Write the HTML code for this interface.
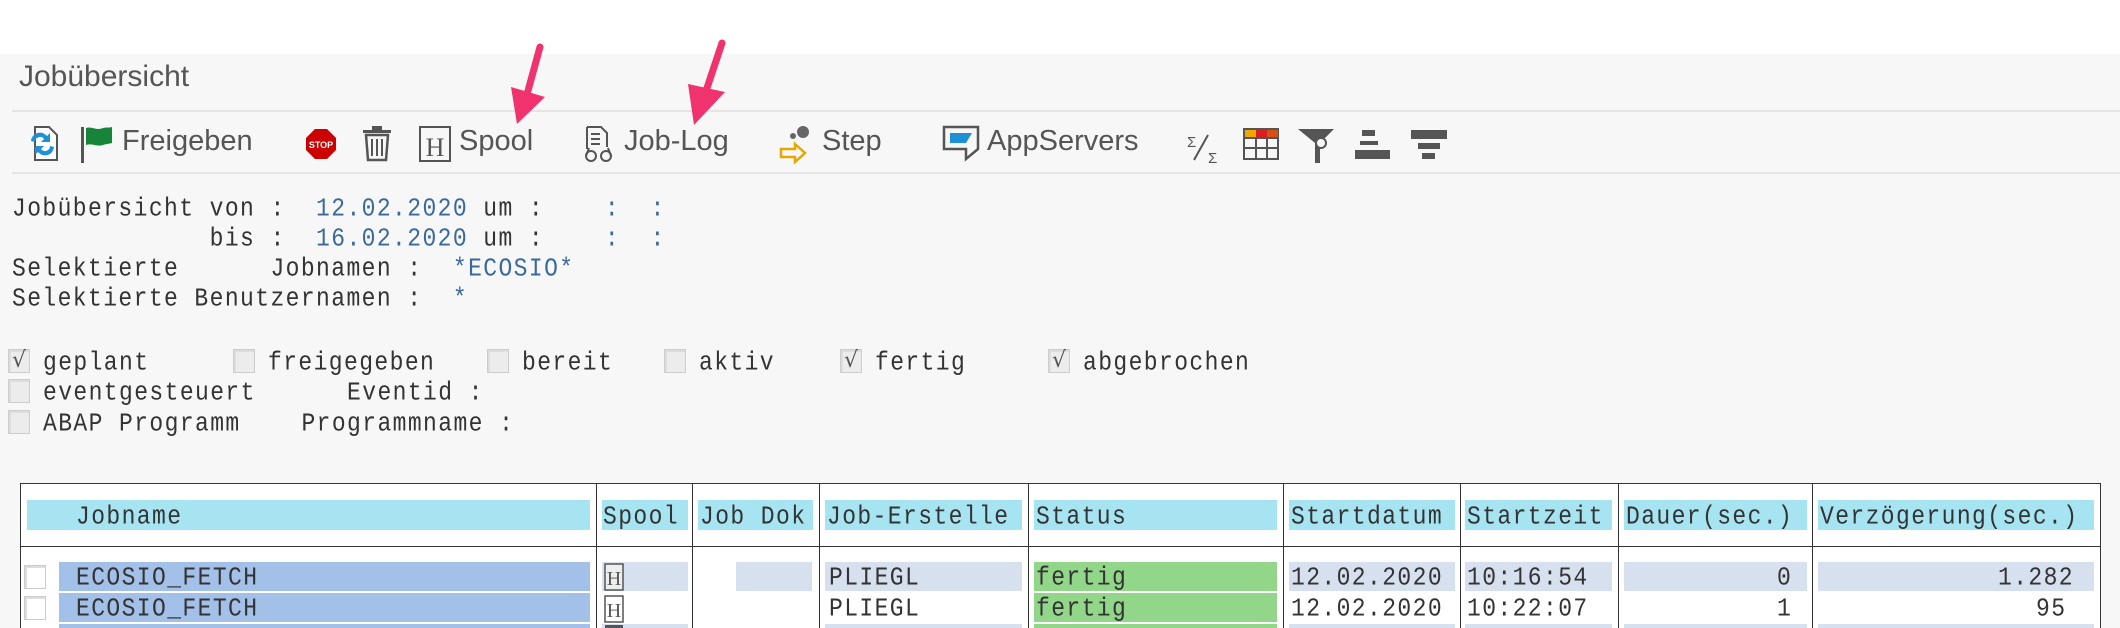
<!DOCTYPE html>
<html style="width:2120px;height:628px;overflow:hidden"><head><meta charset="utf-8"><style>
*{margin:0;padding:0;box-sizing:border-box}
body{width:2120px;height:628px;background:#fff;position:relative;overflow:hidden;font-family:"Liberation Sans",sans-serif}
.bg{position:absolute;left:0;top:54px;width:2120px;height:574px;background:#f7f7f7}
.a{position:absolute;white-space:pre}
.tb{font-size:29px;color:#555;top:125px}
.m{font-family:"Liberation Mono",monospace;font-size:23px;letter-spacing:1.4px;color:#333;transform:scaleY(1.12);transform-origin:0 0}
.v{color:#3a6a9c}
.cb{position:absolute;width:22px;height:24px;background:#ececec;border:1px solid #ccc;box-shadow:inset 2px 2px 0 #ddd}
.cb.c::after{content:"\221A";position:absolute;left:3px;top:-2px;font-size:22px;color:#555;font-family:"DejaVu Sans",sans-serif}
.hd{position:absolute;background:#a6e4f2;top:500px;height:30px}
.vl{position:absolute;width:1px;background:#333;top:483px;height:145px}
.cell{position:absolute;height:29px}
</style></head><body>
<div class="bg"></div>
<div class="a" style="left:19px;top:60px;font-size:30px;color:#555">Jobübersicht</div>
<div style="position:absolute;left:12px;top:110px;width:2108px;height:2px;background:#e4e4e4"></div>
<div style="position:absolute;left:12px;top:172px;width:2108px;height:2px;background:#e4e4e4"></div>

<svg style="position:absolute;left:0;top:115px" width="1480" height="55">
 <path d="M35 12h14l8 8v25H35z" fill="#fff" stroke="#555" stroke-width="2"/>
 <path d="M31 26a9 9 0 0 1 16-5l3-3v9h-9l3-3a5 5 0 0 0-9 3z" fill="#1e90d8"/>
 <path d="M54 32a9 9 0 0 1-16 5l-3 3v-9h9l-3 3a5 5 0 0 0 9-3z" fill="#1e90d8"/>
 <rect x="81" y="12" width="3" height="36" fill="#555"/>
 <path d="M86 13c6 -2 10 3 17 0 3-1 6 0 9-1v16c-4 1-6 1-9 2-6 2-11-2-17 0z" fill="#18843a"/>
 <polygon points="315,14 327,14 336,23 336,35 327,44 315,44 306,35 306,23" fill="#c00"/>
 <text x="321" y="33" font-size="9" font-weight="bold" fill="#fff" text-anchor="middle" font-family="Liberation Sans">STOP</text>
 <rect x="363" y="15" width="28" height="3" fill="#555"/><rect x="372" y="11" width="10" height="4" fill="#555"/>
 <path d="M366 20h22l-2 25h-18z" fill="none" stroke="#555" stroke-width="2.5"/>
 <path d="M372 24v17M377 24v17M382 24v17" stroke="#555" stroke-width="2"/>
 <rect x="420" y="12" width="30" height="34" fill="none" stroke="#555" stroke-width="2"/>
 <text x="435" y="41" font-size="26" fill="#555" text-anchor="middle" font-family="Liberation Serif">H</text>
 <path d="M587 12h14l6 6v14" fill="none" stroke="#555" stroke-width="2"/><path d="M587 12v22" stroke="#555" stroke-width="2"/>
 <path d="M591 19h9M591 24h9M591 29h9" stroke="#555" stroke-width="2"/>
 <circle cx="591" cy="41" r="5" fill="none" stroke="#555" stroke-width="2"/><circle cx="606" cy="41" r="5" fill="none" stroke="#555" stroke-width="2"/>
 <path d="M586 41l3-8M611 41l-3-8" stroke="#555" stroke-width="2"/>
 <circle cx="803" cy="17" r="6" fill="#666"/><circle cx="793" cy="21" r="3" fill="#666"/>
 <path d="M781 34h14v-5l10 9-10 9v-5h-14z" fill="none" stroke="#e6a800" stroke-width="2.5"/>
 <path d="M944 12h34v22l-12 10v-10h-22z" fill="none" stroke="#555" stroke-width="2.5"/>
 <path d="M950 18h22l-6 10h-16z" fill="#1e90d8"/>
 <text x="1187" y="32" font-size="15" fill="#555">Σ</text><path d="M1194 45l14-25" stroke="#555" stroke-width="2"/><text x="1208" y="48" font-size="15" fill="#555">Σ</text>
 <rect x="1244" y="14" width="34" height="30" fill="none" stroke="#555" stroke-width="2"/>
 <rect x="1245" y="15" width="11" height="8" fill="#f0a800"/><rect x="1256" y="15" width="11" height="8" fill="#d82020"/><rect x="1267" y="15" width="11" height="8" fill="#d85010"/>
 <path d="M1244 23h34M1244 33h34M1256 23v21M1267 23v21" stroke="#555" stroke-width="2"/>
 <path d="M1298 14h36l-14 14v20h-5v-20z" fill="#555"/><circle cx="1321" cy="28" r="5" fill="#f7f7f7" stroke="#555" stroke-width="2"/>
 <rect x="1362" y="15" width="13" height="6" fill="#555"/><rect x="1360" y="26" width="18" height="4" fill="#555"/><rect x="1355" y="35" width="35" height="9" fill="#555"/>
 <rect x="1411" y="15" width="36" height="9" fill="#555"/><rect x="1418" y="28" width="22" height="6" fill="#555"/><rect x="1422" y="38" width="13" height="6" fill="#555"/>
</svg>
<div class="a tb" style="left:122px">Freigeben</div>
<div class="a tb" style="left:459px">Spool</div>
<div class="a tb" style="left:624px">Job-Log</div>
<div class="a tb" style="left:822px">Step</div>
<div class="a tb" style="left:987px">AppServers</div>

<svg style="position:absolute;left:0;top:0" width="800" height="140">
 <path d="M540 47 L526 98" stroke="#f0336e" stroke-width="7" stroke-linecap="round"/>
 <polygon points="511,87 545,97 517,124" fill="#f0336e"/>
 <path d="M722 43 L705 94" stroke="#f0336e" stroke-width="7" stroke-linecap="round"/>
 <polygon points="688,84 725,92 694,125" fill="#f0336e"/>
</svg>

<div class="a m" style="left:12px;top:194px">Jobübersicht von :  <span class="v">12.02.2020</span> um :    <span class="v">:  :</span></div>
<div class="a m" style="left:12px;top:224px">             bis :  <span class="v">16.02.2020</span> um :    <span class="v">:  :</span></div>
<div class="a m" style="left:12px;top:254px">Selektierte      Jobnamen :  <span class="v">*ECOSIO*</span></div>
<div class="a m" style="left:12px;top:284px">Selektierte Benutzernamen :  <span class="v">*</span></div>

<div class="cb c" style="left:8px;top:349px"></div><div class="a m" style="left:43px;top:348px">geplant</div>
<div class="cb" style="left:233px;top:349px"></div><div class="a m" style="left:268px;top:348px">freigegeben</div>
<div class="cb" style="left:487px;top:349px"></div><div class="a m" style="left:522px;top:348px">bereit</div>
<div class="cb" style="left:664px;top:349px"></div><div class="a m" style="left:699px;top:348px">aktiv</div>
<div class="cb c" style="left:840px;top:349px"></div><div class="a m" style="left:875px;top:348px">fertig</div>
<div class="cb c" style="left:1048px;top:349px"></div><div class="a m" style="left:1083px;top:348px">abgebrochen</div>
<div class="cb" style="left:8px;top:379px"></div><div class="a m" style="left:43px;top:378px">eventgesteuert      Eventid :</div>
<div class="cb" style="left:8px;top:410px"></div><div class="a m" style="left:43px;top:409px">ABAP Programm    Programmname :</div>

<div style="position:absolute;left:20px;top:483px;width:2081px;height:145px;background:#fff;border:1px solid #333;border-bottom:none"></div>
<div style="position:absolute;left:20px;top:546px;width:2081px;height:1px;background:#333"></div>
<div class="vl" style="left:596px"></div><div class="vl" style="left:692px"></div><div class="vl" style="left:819px"></div><div class="vl" style="left:1028px"></div><div class="vl" style="left:1283px"></div><div class="vl" style="left:1460px"></div><div class="vl" style="left:1618px"></div><div class="vl" style="left:1812px"></div>
<div class="hd" style="left:27px;width:563px"></div><div class="hd" style="left:602px;width:86px"></div><div class="hd" style="left:698px;width:115px"></div><div class="hd" style="left:825px;width:197px"></div><div class="hd" style="left:1034px;width:243px"></div><div class="hd" style="left:1289px;width:166px"></div><div class="hd" style="left:1465px;width:147px"></div><div class="hd" style="left:1624px;width:183px"></div><div class="hd" style="left:1818px;width:276px"></div>
<div class="a m" style="left:76px;top:502px">Jobname</div>
<div class="a m" style="left:603px;top:502px">Spool</div>
<div class="a m" style="left:700px;top:502px">Job Dok</div>
<div class="a m" style="left:827px;top:502px">Job-Erstelle</div>
<div class="a m" style="left:1036px;top:502px">Status</div>
<div class="a m" style="left:1291px;top:502px">Startdatum</div>
<div class="a m" style="left:1467px;top:502px">Startzeit</div>
<div class="a m" style="left:1626px;top:502px">Dauer(sec.)</div>
<div class="a m" style="left:1820px;top:502px">Verzögerung(sec.)</div>

<div class="cell" style="left:59px;top:562px;width:531px;background:#a3c0e8"></div>
<div class="cell" style="left:59px;top:593px;width:531px;background:#a3c0e8"></div>
<div class="cell" style="left:59px;top:624px;width:531px;height:4px;background:#a3c0e8"></div>
<div class="cell" style="left:602px;top:562px;width:86px;background:#d6e0ee"></div>
<div class="cell" style="left:736px;top:562px;width:76px;background:#d6e0ee"></div>
<div class="cell" style="left:825px;top:562px;width:197px;background:#d6e0ee"></div>
<div class="cell" style="left:1034px;top:562px;width:243px;background:#92d68a"></div>
<div class="cell" style="left:1034px;top:593px;width:243px;background:#92d68a"></div>
<div class="cell" style="left:1034px;top:624px;width:243px;height:4px;background:#92d68a"></div>
<div class="cell" style="left:1289px;top:562px;width:166px;background:#d6e0ee"></div>
<div class="cell" style="left:1465px;top:562px;width:147px;background:#d6e0ee"></div>
<div class="cell" style="left:1624px;top:562px;width:183px;background:#d6e0ee"></div>
<div class="cell" style="left:1818px;top:562px;width:276px;background:#d6e0ee"></div>
<div class="cell" style="left:602px;top:624px;width:86px;height:4px;background:#d6e0ee"></div>
<div class="cell" style="left:825px;top:624px;width:197px;height:4px;background:#d6e0ee"></div>
<div class="cell" style="left:1289px;top:624px;width:166px;height:4px;background:#d6e0ee"></div>
<div class="cell" style="left:1465px;top:624px;width:147px;height:4px;background:#d6e0ee"></div>
<div class="cell" style="left:1624px;top:624px;width:183px;height:4px;background:#d6e0ee"></div>
<div class="cell" style="left:1818px;top:624px;width:276px;height:4px;background:#d6e0ee"></div>
<div class="cb" style="left:24px;top:565px;background:#fff"></div>
<div class="cb" style="left:24px;top:596px;background:#fff"></div>
<svg style="position:absolute;left:604px;top:563px" width="24" height="65"><rect x="1" y="1" width="18" height="26" fill="#eee" stroke="#555" stroke-width="1.5"/><text x="10" y="22" font-size="20" text-anchor="middle" fill="#555" font-family="Liberation Serif">H</text><rect x="1" y="33" width="18" height="26" fill="#fff" stroke="#555" stroke-width="1.5"/><text x="10" y="54" font-size="20" text-anchor="middle" fill="#555" font-family="Liberation Serif">H</text><rect x="1" y="62" width="18" height="3" fill="#555"/></svg>

<div class="a m" style="left:76px;top:563px">ECOSIO_FETCH</div>
<div class="a m" style="left:76px;top:594px">ECOSIO_FETCH</div>
<div class="a m" style="left:829px;top:563px">PLIEGL</div>
<div class="a m" style="left:829px;top:594px">PLIEGL</div>
<div class="a m" style="left:1036px;top:563px">fertig</div>
<div class="a m" style="left:1036px;top:594px">fertig</div>
<div class="a m" style="left:1291px;top:563px">12.02.2020</div>
<div class="a m" style="left:1291px;top:594px">12.02.2020</div>
<div class="a m" style="left:1467px;top:563px">10:16:54</div>
<div class="a m" style="left:1467px;top:594px">10:22:07</div>
<div class="a m" style="left:1777px;top:563px">0</div>
<div class="a m" style="left:1777px;top:594px">1</div>
<div class="a m" style="left:1998px;top:563px">1.282</div>
<div class="a m" style="left:2036px;top:594px">95</div>
</body></html>
